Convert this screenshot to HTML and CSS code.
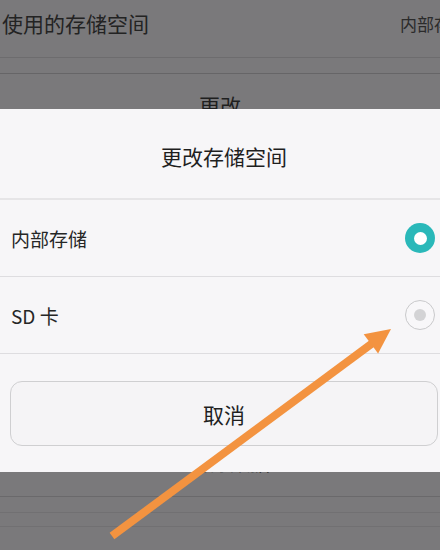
FILE: index.html
```html
<!DOCTYPE html>
<html lang="zh-CN">
<head>
<meta charset="utf-8">
<title>存储设置</title>
<link rel="stylesheet" href="styles.css">
</head>
<body>
<div class="screen">
  <!-- settings page behind the dialog -->
  <div class="page">
    <div class="row-setting">
      <span class="setting-label">使用的存储空间</span>
      <span class="setting-value">内部存储</span>
    </div>
    <div class="section-gap"></div>
    <div class="page-button">更改</div>
    <div class="page-filler"></div>
    <div class="page-button lower">清除数据</div>
    <div class="page-lines">
      <div class="line-row"></div>
      <div class="line-row mid"></div>
      <div class="line-row short"></div>
    </div>
  </div>

  <!-- storage picker dialog -->
  <div class="dialog">
    <div class="dialog-title">更改存储空间</div>
    <div class="option">
      <span class="option-label">内部存储</span>
      <span class="radio checked"></span>
    </div>
    <div class="option">
      <span class="option-label">SD 卡</span>
      <span class="radio"></span>
    </div>
    <div class="dialog-actions">
      <button class="cancel-btn">取消</button>
    </div>
  </div>

  <!-- pointer arrow annotation -->
  <svg class="pointer" width="440" height="550" viewBox="0 0 440 550">
    <line x1="112" y1="536" x2="374" y2="342" stroke="#f39340" stroke-width="8"/>
    <polygon points="391,329 363.7,334.3 378.1,353.5" fill="#f39340"/>
  </svg>
</div>
</body>
</html>
```

FILE: styles.css
```css
html, body {
  margin: 0;
  padding: 0;
}

body {
  width: 440px;
  height: 550px;
  overflow: hidden;
  font-family: "Noto Sans CJK SC", "Noto Sans", sans-serif;
  color: #222;
}

.screen {
  position: relative;
  width: 440px;
  height: 550px;
  overflow: hidden;
  background: #7a797b;
}

/* background page, wider than the window so its right edge runs off-screen */
.page {
  display: flex;
  flex-direction: column;
  width: 448px;
}

.row-setting {
  height: 57px;
  display: flex;
  align-items: center;
  justify-content: space-between;
  padding: 0 0 0 2px;
  border-bottom: 1px solid #6d6c6e;
}

.setting-label {
  font-size: 21px;
  color: #232323;
  margin-top: -11px;
}

.setting-value {
  font-size: 17px;
  color: #2b2b2b;
  width: 48px;
  white-space: nowrap;
  overflow: hidden;
  margin-top: -11px;
}

.section-gap {
  height: 15px;
  border-bottom: 1px solid #666567;
}

.page-button {
  text-align: center;
  font-size: 21px;
  line-height: 30px;
  padding-top: 16px;
  padding-right: 8px;
  color: #1f1f1f;
}

.page-filler {
  height: 331px;
}

.page-button.lower {
  padding-top: 0;
  font-size: 20px;
  line-height: 24px;
  padding-right: 0;
  padding-left: 12px;
}

.page-lines {
  display: flex;
  flex-direction: column;
}

.line-row {
  height: 21px;
  border-bottom: 1px solid #6a696b;
}

.line-row.mid {
  height: 15px;
  border-bottom-color: #717072;
}

.line-row.short {
  height: 13px;
  border-bottom-color: #717072;
}

/* dialog */
.dialog {
  position: absolute;
  top: 109px;
  left: 0;
  width: 448px;
  height: 363px;
  background: #f7f6f8;
  display: flex;
  flex-direction: column;
}

.dialog-title {
  height: 91px;
  display: flex;
  align-items: center;
  justify-content: center;
  font-size: 21px;
  color: #1f1f1f;
  border-bottom: 2px solid #e6e5e7;
  padding-top: 4px;
  box-sizing: border-box;
}

.option {
  height: 76px;
  display: flex;
  align-items: center;
  justify-content: space-between;
  padding: 0 13px 0 11px;
  border-bottom: 1px solid #dedde0;
}

.option-label {
  font-size: 19px;
  color: #262626;
}

.radio {
  width: 28px;
  height: 28px;
  border-radius: 50%;
  border: 1px solid #c9c9cb;
  display: flex;
  align-items: center;
  justify-content: center;
  background: #f8f7f9;
}

.radio::after {
  content: "";
  width: 12px;
  height: 12px;
  border-radius: 50%;
  background: #d3d3d5;
}

.radio.checked {
  width: 30px;
  height: 30px;
  border: none;
  background: #2ab8b9;
}

.radio.checked::after {
  width: 13px;
  height: 13px;
  background: #ffffff;
}

.dialog-actions {
  flex: 1;
  padding: 27px 10px 26px 10px;
  display: flex;
}

.cancel-btn {
  flex: 1;
  border: 1px solid #cfcfd1;
  border-radius: 12px;
  background: #f5f4f6;
  font-family: "Noto Sans CJK SC", "Noto Sans", sans-serif;
  font-size: 21px;
  color: #1f1f1f;
  padding: 0;
}

/* annotation arrow */
.pointer {
  position: absolute;
  top: 0;
  left: 0;
  pointer-events: none;
}
```
